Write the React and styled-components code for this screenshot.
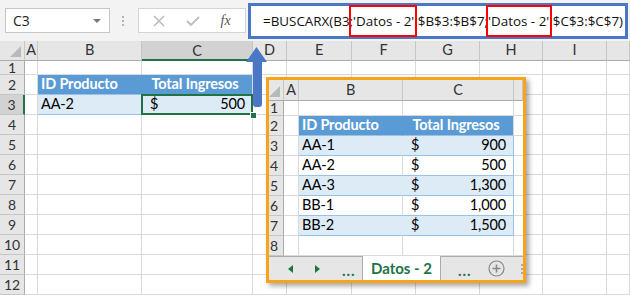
import React from 'react';
import styled, { createGlobalStyle, css } from 'styled-components';

// excel-ish palette
const GREEN = '#217346';
const GRID = '#d9d9d9';
const HEAD_BG = '#e6e6e6';
const HEAD_SEL = '#d2d2d2';
const BLUE_HEAD = '#5b9bd5';
const BLUE_LIGHT = '#ddebf7';
const BLUE_LINE = '#9bc2e6';

const GlobalStyle = createGlobalStyle`
	body {
		margin: 0;
		background: #fff;
		overflow: hidden;
	}
	* {
		box-sizing: border-box;
	}
`;

const Page = styled.div`
	position: relative;
	width: 630px;
	height: 295px;
	overflow: hidden;
	font-family: Lato, 'Liberation Sans', sans-serif;
`;

const TopBar = styled.div`
	display: flex;
	align-items: center;
	height: 41px;
	padding: 0 2px 0 5px;
	background: #f3f3f3;
`;

const NameBox = styled.div`
	display: flex;
	align-items: center;
	justify-content: space-between;
	width: 105px;
	height: 25px;
	padding: 0 8px 0 7px;
	background: #fff;
	border: 1px solid #c6c6c6;
	font-family: 'Open Sans', sans-serif;
	font-size: 14px;
	color: #222;
`;

const DropArrow = styled.span`
	width: 0;
	height: 0;
	border-left: 4px solid transparent;
	border-right: 4px solid transparent;
	border-top: 4px solid #777;
`;

const Grip = styled.div`
	display: flex;
	flex-direction: column;
	gap: 2px;
	margin: 0 14px 0 12px;
	span {
		width: 2px;
		height: 2px;
		background: #b4b4b4;
	}
`;

const FxBox = styled.div`
	display: flex;
	align-items: center;
	justify-content: space-around;
	width: 108px;
	height: 25px;
	padding: 0 4px;
	background: #fff;
	border: 1px solid #d4d4d4;
`;

const Fx = styled.span`
	font-family: 'Liberation Serif', serif;
	font-style: italic;
	font-size: 14px;
	color: #555;
`;

const FormulaBar = styled.div`
	flex: 1;
	display: flex;
	align-items: center;
	height: 36px;
	margin-left: 2px;
	padding-left: 12px;
	background: #fff;
	border: 3px solid #4a78c6;
	font-family: 'Open Sans', sans-serif;
	font-size: 13.4px;
	color: #111;
	white-space: pre;
`;

const Mark = styled.span`
	position: relative;
	&::after {
		content: '';
		position: absolute;
		left: ${(p) => p.$left}px;
		right: ${(p) => p.$right}px;
		top: -7px;
		bottom: -7px;
		border: 2px solid #f00;
	}
`;

const Grid = styled.div`
	display: grid;
	grid-template-columns: ${(p) => p.$cols.map((c) => `${c}px`).join(' ')};
	grid-template-rows: ${(p) => p.$rows.map((r) => `${r}px`).join(' ')};
	font-size: 14.5px;
	letter-spacing: -0.15px;
	line-height: 1;
	color: #000;
`;

const Corner = styled.div`
	position: relative;
	background: ${HEAD_BG};
	border-right: 1px solid #c6c6c6;
	border-bottom: 1px solid #ababab;
	&::after {
		content: '';
		position: absolute;
		right: 3px;
		bottom: 3px;
		width: 11px;
		height: 11px;
		background: #b9b9b9;
		clip-path: polygon(100% 0, 100% 100%, 0 100%);
	}
`;

const ColHead = styled.div`
	display: flex;
	align-items: center;
	justify-content: center;
	background: ${(p) => (p.$selected ? HEAD_SEL : HEAD_BG)};
	border-right: 1px solid #c6c6c6;
	border-bottom: ${(p) => (p.$selected ? `2px solid ${GREEN}` : '1px solid #ababab')};
	color: #333;
	padding-top: ${(p) => (p.$selected ? 2 : 0)}px;
`;

const RowHead = styled.div`
	display: flex;
	align-items: center;
	justify-content: ${(p) => (p.$compact ? 'flex-start' : 'center')};
	padding-left: ${(p) => (p.$compact ? 1 : 0)}px;
	background: ${(p) => (p.$selected ? HEAD_SEL : HEAD_BG)};
	border-right: ${(p) => (p.$selected ? `2px solid ${GREEN}` : '1px solid #ababab')};
	border-bottom: 1px solid #c6c6c6;
	font-size: 14px;
	line-height: 12px;
	color: #333;
`;

const Cell = styled.div`
	position: relative;
	display: flex;
	align-items: center;
	justify-content: ${(p) => p.$justify || 'flex-start'};
	padding: 0 7px 0 ${(p) => p.$padLeft ?? 3}px;
	background: ${(p) => p.$fill || '#fff'};
	border-right: 1px solid ${(p) => p.$rightLine || GRID};
	border-bottom: 1px solid ${(p) => p.$bottomLine || GRID};
	font-weight: ${(p) => (p.$bold ? 700 : 400)};
	color: ${(p) => p.$color || '#000'};
	white-space: nowrap;
	${(p) =>
		p.$selected &&
		css`
			&::after {
				content: '';
				position: absolute;
				inset: -1px -1px -1px -1px;
				border: 2px solid ${GREEN};
			}
		`}
`;

const FillHandle = styled.span`
	position: absolute;
	right: -5px;
	bottom: -5px;
	width: 7px;
	height: 7px;
	background: ${GREEN};
	border: 1px solid #fff;
	z-index: 2;
`;

const Inset = styled.div`
	position: absolute;
	left: 266px;
	top: 77px;
	width: 260px;
	height: 206px;
	display: flex;
	flex-direction: column;
	border: 3px solid #f8a41b;
	background: #fff;
	box-shadow: 3px 3px 5px rgba(0, 0, 0, 0.35);
	overflow: hidden;
`;

const TabBar = styled.div`
	display: flex;
	align-items: stretch;
	height: 24px;
	background: ${HEAD_BG};
	font-size: 15px;
`;

const TabNav = styled.div`
	display: flex;
	align-items: center;
	flex: ${(p) => (p.$grow ? 1 : 'none')};
	width: ${(p) => (p.$w ? `${p.$w}px` : 'auto')};
	padding-left: ${(p) => p.$pad || 0}px;
	gap: ${(p) => p.$gap || 0}px;
	border-top: 1px solid #ababab;
`;

const Tri = styled.span`
	width: 0;
	height: 0;
	border-top: 4px solid transparent;
	border-bottom: 4px solid transparent;
	${(p) => (p.$dir === 'left' ? `border-right: 5px solid ${GREEN};` : `border-left: 5px solid ${GREEN};`)}
`;

const Dots = styled.span`
	color: ${GREEN};
	font-weight: 700;
	letter-spacing: 1px;
	line-height: 1;
	padding-top: 4px;
`;

const ActiveTab = styled.div`
	display: flex;
	align-items: center;
	justify-content: center;
	width: 79px;
	background: #fff;
	border-left: 1px solid #ababab;
	border-right: 1px solid #ababab;
	color: ${GREEN};
	font-weight: 700;
	font-size: 15px;
`;

const VGrip = styled.div`
	display: flex;
	flex-direction: column;
	gap: 2px;
	margin-left: auto;
	margin-right: 0;
	span {
		width: 2px;
		height: 2px;
		background: #aaa;
	}
`;

const ArrowSvg = styled.svg`
	position: absolute;
	left: 246px;
	top: 46px;
`;

function money(amount) {
	return (
		<>
			<span>$</span>
			<span>{amount}</span>
		</>
	);
}

// spec -> Cell props
function cellProps(spec, col, lastTableCol) {
	if (!spec) return {};
	const edge = col === lastTableCol;
	if (spec.kind === 'head') {
		return {
			$fill: BLUE_HEAD,
			$bold: true,
			$color: '#fff',
			$rightLine: edge ? GRID : BLUE_HEAD,
			$bottomLine: BLUE_LINE,
			$justify: spec.center ? 'center' : 'flex-start',
		};
	}
	const fill = spec.band === 'light' ? BLUE_LIGHT : '#fff';
	return {
		$fill: fill,
		$rightLine: edge ? BLUE_LINE : spec.band === 'light' ? BLUE_LIGHT : GRID,
		$bottomLine: BLUE_LINE,
		$justify: spec.money ? 'space-between' : 'flex-start',
		$padLeft: spec.money ? 8 : 3,
		$selected: spec.selected,
	};
}

function Sheet({ cols, letters, rows, data, selCol, selRow, compact, lastTableCol }) {
	return (
		<Grid $cols={cols} $rows={rows}>
			<Corner />
			{letters.map((l, i) => (
				<ColHead key={i} $selected={selCol === i + 1}>
					{l}
				</ColHead>
			))}
			{rows.slice(1).map((h, ri) => {
				const r = ri + 1;
				return (
					<React.Fragment key={r}>
						<RowHead $selected={selRow === r} $compact={compact}>
							{r}
						</RowHead>
						{cols.slice(1).map((w, ci) => {
							const c = ci + 1;
							const spec = data[`${r}:${c}`];
							return (
								<Cell key={c} {...cellProps(spec, c, lastTableCol)}>
									{spec && (spec.money ? money(spec.value) : spec.value)}
									{spec && spec.selected && <FillHandle />}
								</Cell>
							);
						})}
					</React.Fragment>
				);
			})}
		</Grid>
	);
}

const mainData = {
	'2:2': { kind: 'head', value: 'ID Producto' },
	'2:3': { kind: 'head', value: 'Total Ingresos', center: true },
	'3:2': { band: 'light', value: 'AA-2' },
	'3:3': { band: 'light', value: '500', money: true, selected: true },
};

const products = [
	['AA-1', '900'],
	['AA-2', '500'],
	['AA-3', '1,300'],
	['BB-1', '1,000'],
	['BB-2', '1,500'],
];

const insetData = {
	'2:2': { kind: 'head', value: 'ID Producto' },
	'2:3': { kind: 'head', value: 'Total Ingresos', center: true },
};
products.forEach(([id, total], i) => {
	const band = i % 2 === 0 ? 'light' : 'white';
	insetData[`${i + 3}:2`] = { band, value: id };
	insetData[`${i + 3}:3`] = { band, value: total, money: true };
});

export default function App() {
	return (
		<Page>
			<GlobalStyle />
			<TopBar>
				<NameBox>
					C3
					<DropArrow />
				</NameBox>
				<Grip>
					<span />
					<span />
					<span />
				</Grip>
				<FxBox>
					<svg width="12" height="12" viewBox="0 0 12 12">
						<path d="M1 1 L11 11 M11 1 L1 11" stroke="#bdbdbd" strokeWidth="1.6" />
					</svg>
					<svg width="14" height="12" viewBox="0 0 14 12">
						<path d="M1 6 L5 10 L13 2" stroke="#bdbdbd" strokeWidth="1.8" fill="none" />
					</svg>
					<Fx>fx</Fx>
				</FxBox>
				<FormulaBar>
					=BUSCARX(B3<Mark $left={-1} $right={-3}>;'Datos - 2'</Mark>!$B$3:$B$7;
					<Mark $left={-2} $right={-3}>'Datos - 2'</Mark>!$C$3:$C$7)
				</FormulaBar>
			</TopBar>

			<Sheet
				cols={[25, 13, 104, 111, 34, 65, 64, 64, 63, 64, 23]}
				letters={['A', 'B', 'C', 'D', 'E', 'F', 'G', 'H', 'I', '']}
				rows={[20, 14, 20, 20, 20, 20, 20, 20, 20, 20, 20, 20, 20]}
				data={mainData}
				selCol={3}
				selRow={3}
				lastTableCol={3}
			/>

			<ArrowSvg width="22" height="62" viewBox="0 0 22 62">
				<path
					d="M10.5 1 L21 16 L16 16 L16 58 Q16 61 13 61 L10 61 Q7 61 7 58 L7 16 L0 16 Z"
					fill="#4a78c6"
				/>
			</ArrowSvg>

			<Inset>
				<Sheet
					cols={[15, 15, 104, 111, 9]}
					letters={['A', 'B', 'C', '']}
					rows={[21, 15, 20, 20, 20, 20, 20, 20, 20]}
					data={insetData}
					compact
					lastTableCol={3}
				/>
				<TabBar>
					<TabNav $w={93} $pad={19} $gap={22}>
						<Tri $dir="left" />
						<Tri $dir="right" />
						<Dots>...</Dots>
					</TabNav>
					<ActiveTab>Datos - 2</ActiveTab>
					<TabNav $grow $pad={17} $gap={16}>
						<Dots>...</Dots>
						<svg width="17" height="17" viewBox="0 0 17 17">
							<circle cx="8.5" cy="8.5" r="7.5" fill="none" stroke="#888" strokeWidth="1.2" />
							<path d="M8.5 4.5 V12.5 M4.5 8.5 H12.5" stroke="#888" strokeWidth="1.6" />
						</svg>
						<VGrip>
							<span />
							<span />
							<span />
						</VGrip>
					</TabNav>
				</TabBar>
			</Inset>
		</Page>
	);
}
